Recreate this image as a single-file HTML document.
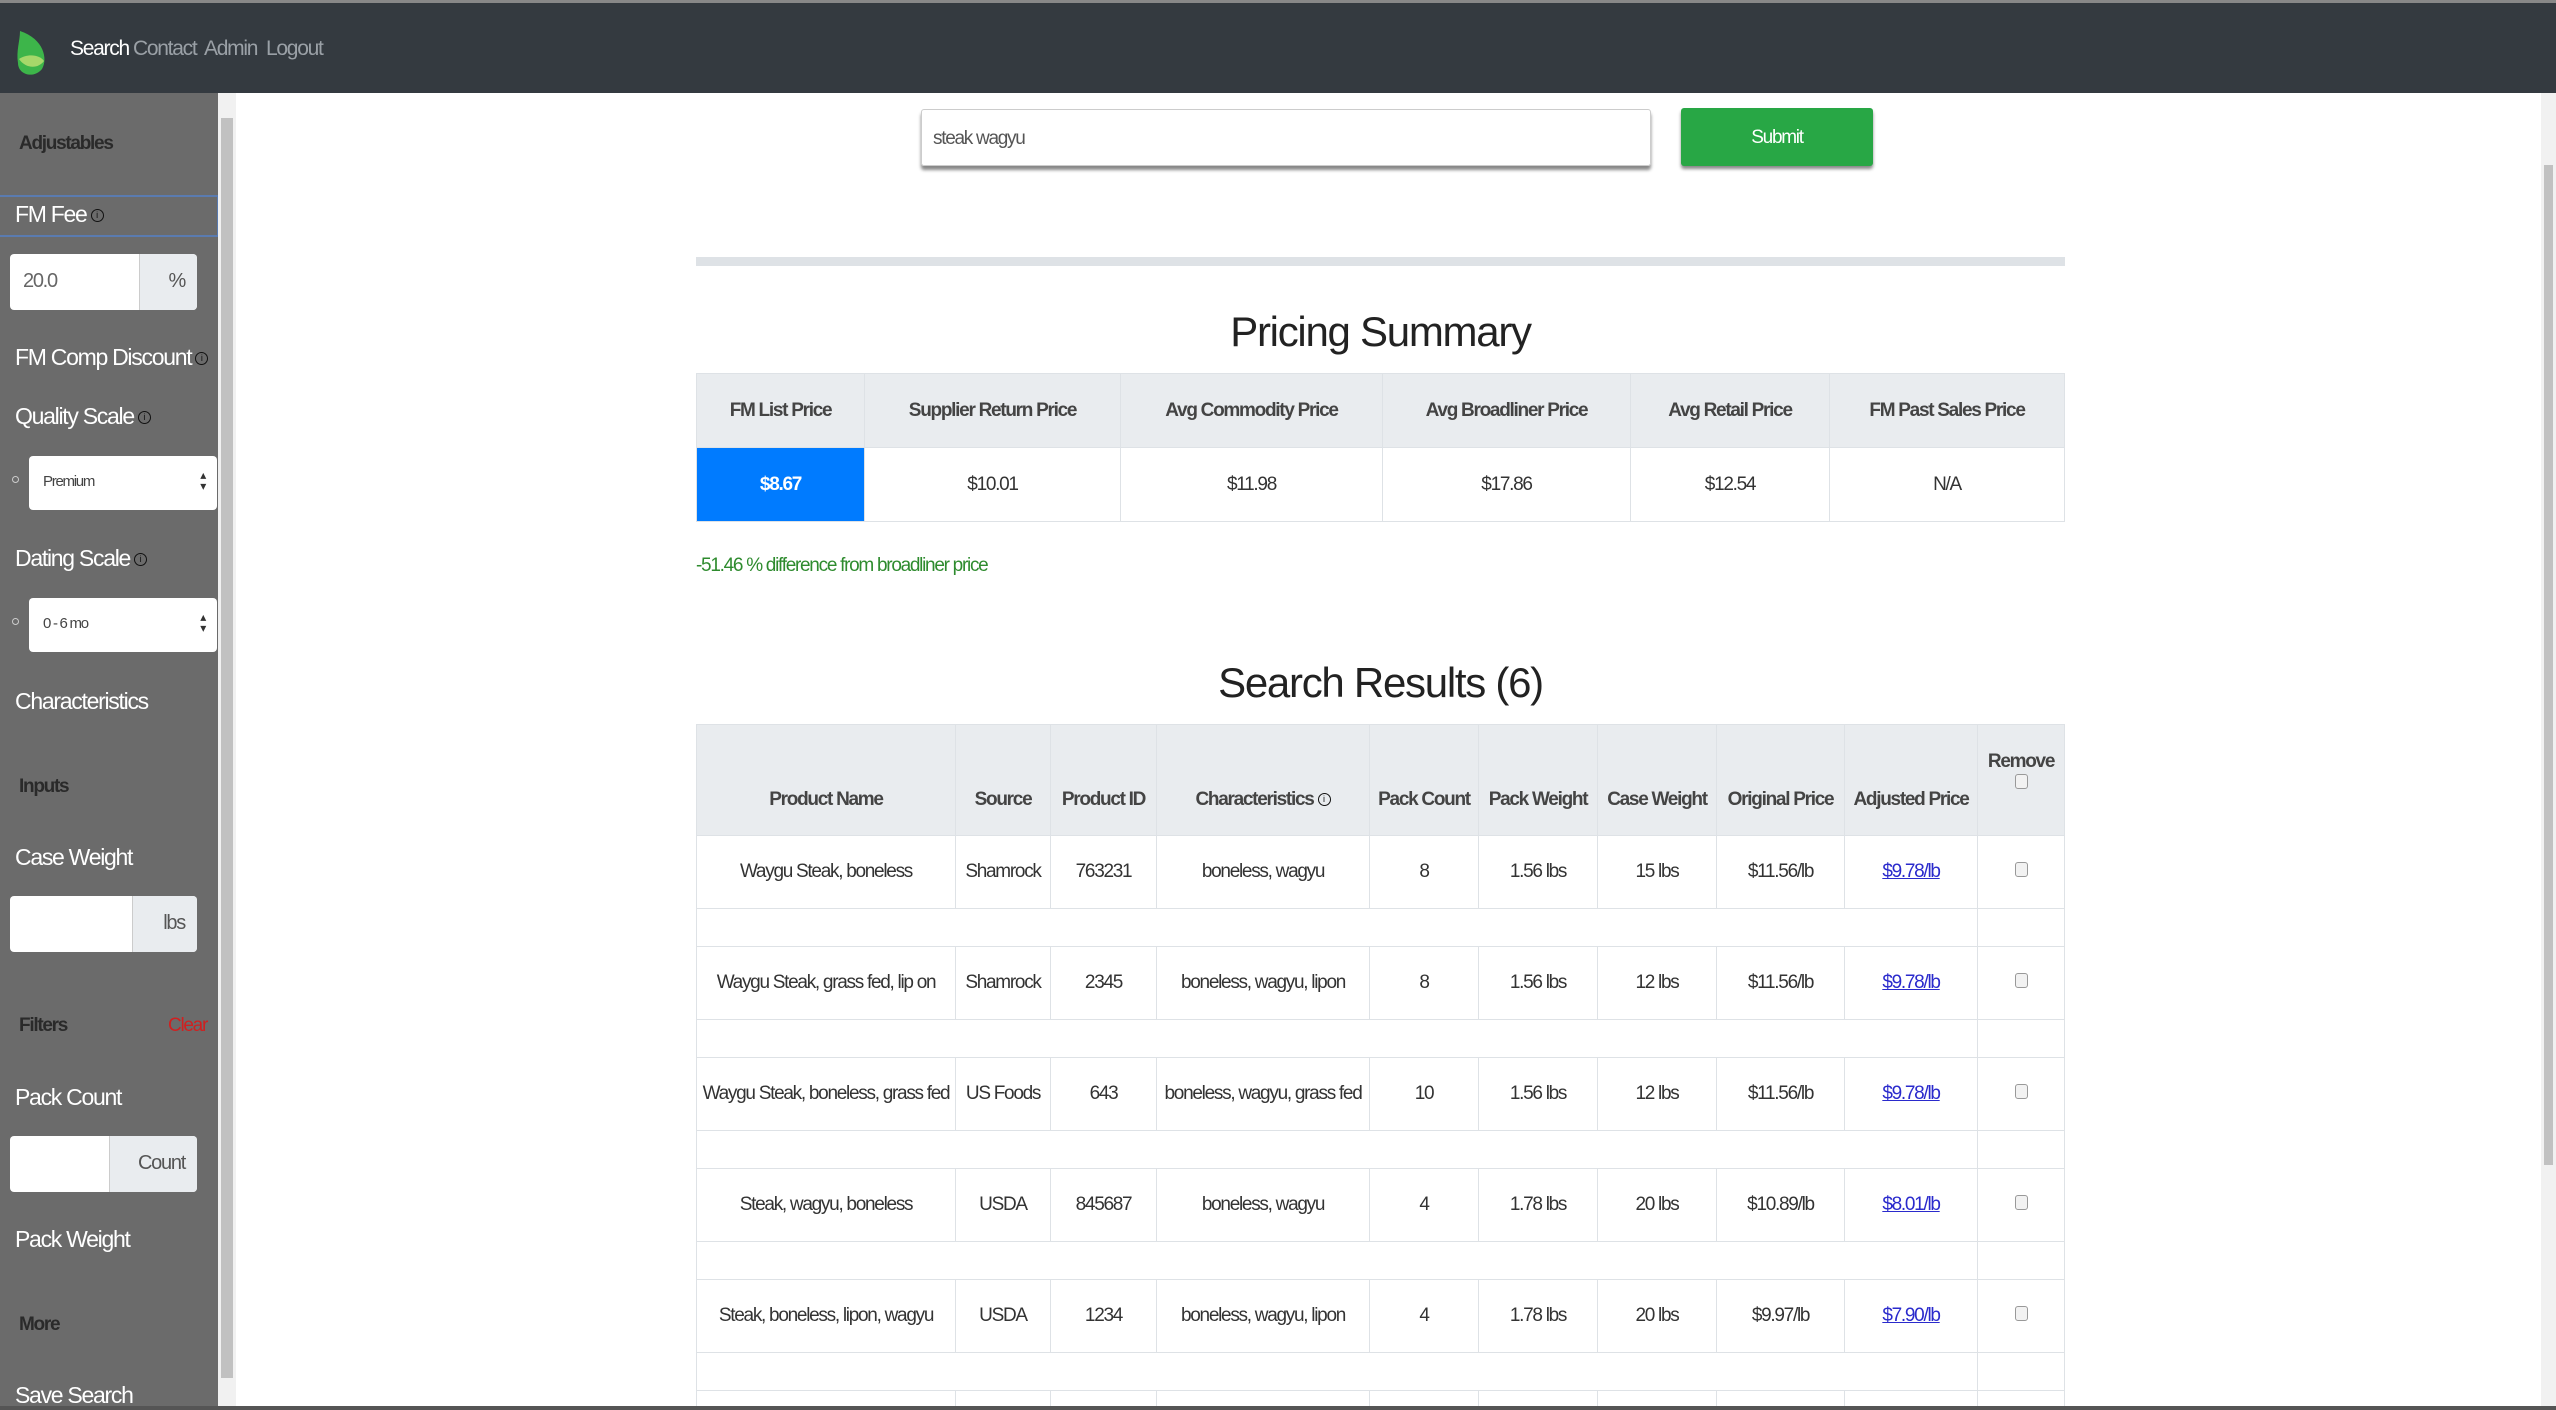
<!DOCTYPE html>
<html style="width:2556px;height:1410px;overflow:hidden"><head><meta charset="utf-8"><style>
*{box-sizing:border-box;margin:0;padding:0}
body{width:2556px;height:1410px;overflow:hidden;background:#fff;font-family:"Liberation Sans",sans-serif;letter-spacing:-0.08em;position:relative;color:#212529}
.a{position:absolute}
.nav{left:0;top:0;width:2556px;height:93px;background:#343a40;border-top:3px solid #888}
.nav span{position:absolute;top:34px;font-size:21px;color:#9aa0a6}
.side{left:0;top:93px;width:218px;height:1317px;background:#6b6b6b}
.sl{position:absolute;left:15px;font-size:23px;color:#fff;white-space:nowrap}
.sh{position:absolute;left:19px;font-size:19px;font-weight:bold;color:#2a2a2a}
.inp{position:absolute;left:10px;width:187px;height:56px;background:#fff;border-radius:4px;overflow:hidden}
.inp .ad{position:absolute;top:0;right:0;height:56px;background:#e9ecef;border-left:1px solid #ccc;color:#555;font-size:20px;text-align:right;padding:16px 12px 0 0}
.sel{position:absolute;left:29px;width:188px;height:54px;background:#fff;border-radius:4px;font-size:15px;color:#444;padding:17px 0 0 14px}
.sel:after{content:"\25B4\A\25BE";white-space:pre;position:absolute;right:12px;top:14px;font-size:12px;line-height:11px;color:#333}
.dot{position:absolute;left:12px;width:7px;height:7px;border:1px solid #ccc;border-radius:50%}
.i{display:inline-block;width:13px;height:13px;border:1.5px solid #111;border-radius:50%;font-size:9px;line-height:10px;text-align:center;color:#111;vertical-align:middle;margin-left:4px;letter-spacing:0}
table{border-collapse:collapse;position:absolute;left:696px;width:1369px;font-size:19px;text-align:center;table-layout:fixed}
th{background:#e9ecef;color:#444;font-weight:bold;border:1px solid #dee2e6;white-space:nowrap}
td{border:1px solid #dee2e6;color:#333;white-space:nowrap}
a{color:#2a2acc;text-decoration:underline}
.cb{display:inline-block;width:13px;height:15px;border:1px solid #999;border-radius:3px;background:#f2f2f2}
</style></head><body>
<div class="a nav">
<svg class="a" style="left:14px;top:26px" width="36" height="50" viewBox="0 0 36 50"><path d="M6 2 C30 10 34 30 28 40 C20 50 4 46 4 34 C2 22 6 12 6 2Z" fill="#3db54a"/><path d="M5 30 C14 24 26 26 30 32 C24 40 12 40 5 30Z" fill="#a6d86a"/></svg>
<span style="left:70px;color:#fff">Search</span><span style="left:133px">Contact</span><span style="left:204px">Admin</span><span style="left:266px">Logout</span>
</div>
<div class="a side">
<div class="sh" style="top:40px">Adjustables</div>
<div class="a" style="left:0;top:102px;width:218px;height:42px;border-top:2px solid #5a7bb0;border-bottom:2px solid #5a7bb0;border-right:1px solid #5a7bb0"></div>
<div class="sl" style="top:108px">FM Fee<span class="i">i</span></div>
<div class="inp" style="top:161px"><span style="position:absolute;left:13px;top:16px;font-size:20px;color:#666">20.0</span><div class="ad" style="width:58px">%</div></div>
<div class="sl" style="top:251px">FM Comp Discount<span class="i">i</span></div>
<div class="sl" style="top:310px">Quality Scale<span class="i">i</span></div>
<div class="dot" style="top:383px"></div><div class="sel" style="top:363px">Premium</div>
<div class="sl" style="top:452px">Dating Scale<span class="i">i</span></div>
<div class="dot" style="top:525px"></div><div class="sel" style="top:505px">0 - 6 mo</div>
<div class="sl" style="top:595px">Characteristics</div>
<div class="sh" style="top:683px">Inputs</div>
<div class="sl" style="top:751px">Case Weight</div>
<div class="inp" style="top:803px"><div class="ad" style="width:65px">lbs</div></div>
<div class="sh" style="top:922px">Filters</div><div class="a" style="left:168px;top:922px;font-size:19px;color:#d02020">Clear</div>
<div class="sl" style="top:991px">Pack Count</div>
<div class="inp" style="top:1043px"><div class="ad" style="width:88px">Count</div></div>
<div class="sl" style="top:1133px">Pack Weight</div>
<div class="sh" style="top:1221px">More</div>
<div class="sl" style="top:1289px">Save Search</div>
</div>
<div class="a" style="left:218px;top:93px;width:18px;height:1317px;background:#f1f1f1"></div>
<div class="a" style="left:221px;top:118px;width:12px;height:1260px;background:#c1c1c1"></div>
<div class="a" style="left:2541px;top:93px;width:15px;height:1317px;background:#f1f1f1"></div>
<div class="a" style="left:2544px;top:165px;width:9px;height:1000px;background:#c1c1c1"></div>

<div class="a" style="left:921px;top:109px;width:730px;height:57px;border:1px solid #ccc;border-radius:3px;box-shadow:0 4px 3px #888;font-size:19px;color:#555;padding:18px 0 0 11px">steak wagyu</div>
<div class="a" style="left:1681px;top:108px;width:192px;height:58px;background:#28a745;border-radius:3px;box-shadow:0 3px 3px #888;color:#fff;font-size:19px;text-align:center;padding-top:19px">Submit</div>
<div class="a" style="left:696px;top:257px;width:1369px;height:9px;background:#dee2e6"></div>
<div class="a" style="left:696px;top:308px;width:1369px;text-align:center;font-size:42px;color:#222">Pricing Summary</div>
<table style="top:373px"><tr style="height:74px"><th style="width:168px">FM List Price</th><th style="width:256px">Supplier Return Price</th><th style="width:262px">Avg Commodity Price</th><th style="width:248px">Avg Broadliner Price</th><th style="width:199px">Avg Retail Price</th><th>FM Past Sales Price</th></tr>
<tr style="height:74px"><td style="background:#007bff;color:#fff;font-weight:bold">$8.67</td><td>$10.01</td><td>$11.98</td><td>$17.86</td><td>$12.54</td><td>N/A</td></tr></table>
<div class="a" style="left:696px;top:555px;font-size:19px;color:#2e8b2e">-51.46 % difference from broadliner price</div>
<div class="a" style="left:696px;top:659px;width:1369px;text-align:center;font-size:42px;color:#222">Search Results (6)</div>
<table style="top:724px"><tr style="height:111px"><th style="width:259px;vertical-align:bottom;padding-bottom:24px">Product Name</th><th style="width:95px;vertical-align:bottom;padding-bottom:24px">Source</th><th style="width:106px;vertical-align:bottom;padding-bottom:24px">Product ID</th><th style="width:213px;vertical-align:bottom;padding-bottom:24px">Characteristics<span class="i" style="font-weight:normal">i</span></th><th style="width:109px;vertical-align:bottom;padding-bottom:24px">Pack Count</th><th style="width:119px;vertical-align:bottom;padding-bottom:24px">Pack Weight</th><th style="width:119px;vertical-align:bottom;padding-bottom:24px">Case Weight</th><th style="width:128px;vertical-align:bottom;padding-bottom:24px">Original Price</th><th style="width:133px;vertical-align:bottom;padding-bottom:24px">Adjusted Price</th><th style="vertical-align:top;padding-top:26px">Remove<br><span class="cb"></span></th></tr>
<tr style="height:73px"><td>Waygu Steak, boneless</td><td>Shamrock</td><td>763231</td><td>boneless, wagyu</td><td>8</td><td>1.56 lbs</td><td>15 lbs</td><td>$11.56/lb</td><td><a>$9.78/lb</a></td><td><span class="cb"></span></td></tr>
<tr style="height:38px"><td colspan="9"></td><td></td></tr>
<tr style="height:73px"><td>Waygu Steak, grass fed, lip on</td><td>Shamrock</td><td>2345</td><td>boneless, wagyu, lipon</td><td>8</td><td>1.56 lbs</td><td>12 lbs</td><td>$11.56/lb</td><td><a>$9.78/lb</a></td><td><span class="cb"></span></td></tr>
<tr style="height:38px"><td colspan="9"></td><td></td></tr>
<tr style="height:73px"><td>Waygu Steak, boneless, grass fed</td><td>US Foods</td><td>643</td><td>boneless, wagyu, grass fed</td><td>10</td><td>1.56 lbs</td><td>12 lbs</td><td>$11.56/lb</td><td><a>$9.78/lb</a></td><td><span class="cb"></span></td></tr>
<tr style="height:38px"><td colspan="9"></td><td></td></tr>
<tr style="height:73px"><td>Steak, wagyu, boneless</td><td>USDA</td><td>845687</td><td>boneless, wagyu</td><td>4</td><td>1.78 lbs</td><td>20 lbs</td><td>$10.89/lb</td><td><a>$8.01/lb</a></td><td><span class="cb"></span></td></tr>
<tr style="height:38px"><td colspan="9"></td><td></td></tr>
<tr style="height:73px"><td>Steak, boneless, lipon, wagyu</td><td>USDA</td><td>1234</td><td>boneless, wagyu, lipon</td><td>4</td><td>1.78 lbs</td><td>20 lbs</td><td>$9.97/lb</td><td><a>$7.90/lb</a></td><td><span class="cb"></span></td></tr>
<tr style="height:38px"><td colspan="9"></td><td></td></tr>
<tr style="height:20px"><td></td><td></td><td></td><td></td><td></td><td></td><td></td><td></td><td></td><td></td></tr>
</table>
<div class="a" style="left:0;top:1406px;width:2556px;height:4px;background:#555"></div>
</body></html>
